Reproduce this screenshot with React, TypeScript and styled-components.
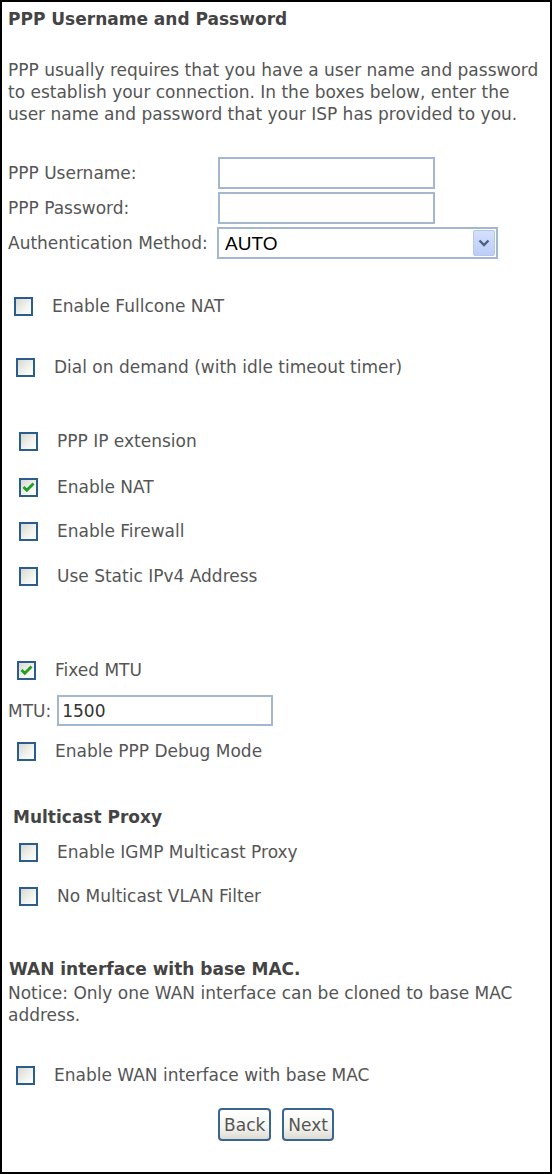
import React from "react";
import styled, { createGlobalStyle } from "styled-components";

const Global = createGlobalStyle`
  html, body { margin: 0; padding: 0; background: #fff; }
  body { font-family: "DejaVu Sans", Verdana, sans-serif; font-size: 17px; color: #555; }
`;

const Page = styled.div`
  box-sizing: border-box;
  width: 552px;
  height: 1174px;
  border: 2px solid #000;
  padding: 6px 0 0 6px;
  line-height: 22px;
`;

const Heading = styled.div<{ $mt?: number; $ml?: number }>`
  font-weight: bold;
  color: #444;
  margin-top: ${(p) => p.$mt ?? 0}px;
  margin-left: ${(p) => p.$ml ?? 0}px;
`;

const Para = styled.p<{ $mt?: number }>`
  margin: ${(p) => p.$mt ?? 0}px 0 0 0;
  white-space: nowrap;
`;

const FormGrid = styled.div`
  display: grid;
  grid-template-columns: 210px auto;
  row-gap: 3px;
  margin-top: 32px;
  align-items: center;
`;

const Label = styled.span``;

const TextBox = styled.input<{ $w: number }>`
  box-sizing: border-box;
  width: ${(p) => p.$w}px;
  height: 32px;
  border: 2px solid #a4b8cd;
  padding: 0 3px;
  font-family: "DejaVu Sans", Verdana, sans-serif;
  font-size: 17px;
  color: #333;
  outline: none;
  background: #fff;
`;

const SelectWrap = styled.div`
  position: relative;
  width: 281px;
  height: 32px;
  margin-left: -1px;
`;

const Select = styled.select`
  appearance: none;
  box-sizing: border-box;
  width: 100%;
  height: 100%;
  border: 2px solid #a4b8cd;
  background: #fff;
  padding: 0 0 0 6px;
  font-family: "Liberation Sans", Arial, sans-serif;
  font-size: 19px;
  color: #000;
  outline: none;
`;

const SelectArrow = styled.span`
  position: absolute;
  top: 3px;
  right: 3px;
  width: 22px;
  height: 26px;
  border-radius: 2px;
  background: linear-gradient(180deg, #d4e0fc 0%, #bccdf7 100%);
  border: 1px solid #b7c8f0;
  box-sizing: border-box;
  display: flex;
  align-items: center;
  justify-content: center;
  pointer-events: none;
`;

const CheckRow = styled.label<{ $mt: number; $ml: number }>`
  display: flex;
  align-items: center;
  height: 22px;
  margin-top: ${(p) => p.$mt}px;
  margin-left: ${(p) => p.$ml}px;
  gap: 19px;
`;

const Box = styled.span`
  box-sizing: border-box;
  flex: none;
  width: 19px;
  height: 19px;
  border: 2px solid #2b5d8c;
  background: linear-gradient(135deg, #d9d9d3 0%, #f3f3ef 60%, #ffffff 100%);
  display: flex;
  align-items: center;
  justify-content: center;
`;

const MtuRow = styled.div`
  display: flex;
  align-items: center;
  margin-top: 14px;
  height: 31px;
`;

const MtuInput = styled(TextBox)`
  height: 31px;
  margin-left: 6px;
`;

const ButtonBar = styled.div`
  display: flex;
  justify-content: center;
  gap: 11px;
  margin-top: 22px;
  margin-left: -6px;
`;

const Button = styled.button`
  box-sizing: border-box;
  height: 33px;
  padding: 0 4px;
  border: 2px solid #3a6592;
  border-radius: 4px;
  background: linear-gradient(180deg, #ffffff 0%, #f4f4f0 60%, #dcdcd2 100%);
  font-family: "DejaVu Sans", Verdana, sans-serif;
  font-size: 17px;
  color: #555;
`;

const Check = ({ on }: { on: boolean }) => (
  <Box>
    {on && (
      <svg width="13" height="12" viewBox="0 0 13 12">
        <path d="M1.5 6 L4.8 9.2 L11.5 2.5" stroke="#1f9e1f" strokeWidth="2.8" fill="none" />
      </svg>
    )}
  </Box>
);

const Opt = ({ text, on = false, mt, ml }: { text: string; on?: boolean; mt: number; ml: number }) => (
  <CheckRow $mt={mt} $ml={ml}>
    <Check on={on} />
    <span>{text}</span>
  </CheckRow>
);

export default function App() {
  return (
    <>
      <Global />
      <Page>
        <Heading>PPP Username and Password</Heading>
        <Para $mt={29}>
          PPP usually requires that you have a user name and password
          <br />
          to establish your connection. In the boxes below, enter the
          <br />
          user name and password that your ISP has provided to you.
        </Para>
        <FormGrid>
          <Label>PPP Username:</Label>
          <TextBox $w={217} />
          <Label>PPP Password:</Label>
          <TextBox $w={217} type="password" />
          <Label>Authentication Method:</Label>
          <SelectWrap>
            <Select defaultValue="AUTO">
              <option>AUTO</option>
              <option>PAP</option>
              <option>CHAP</option>
              <option>MSCHAP</option>
            </Select>
            <SelectArrow>
              <svg width="12" height="8" viewBox="0 0 12 8">
                <path d="M1.5 1.5 L6 6 L10.5 1.5" stroke="#4d6185" strokeWidth="2.4" fill="none" />
              </svg>
            </SelectArrow>
          </SelectWrap>
        </FormGrid>
        <Opt text="Enable Fullcone NAT" mt={36} ml={6} />
        <Opt text="Dial on demand (with idle timeout timer)" mt={39} ml={8} />
        <Opt text="PPP IP extension" mt={52} ml={11} />
        <Opt text="Enable NAT" on mt={24} ml={11} />
        <Opt text="Enable Firewall" mt={22} ml={11} />
        <Opt text="Use Static IPv4 Address" mt={23} ml={11} />
        <Opt text="Fixed MTU" on mt={72} ml={9} />
        <MtuRow>
          <Label>MTU:</Label>
          <MtuInput $w={216} defaultValue="1500" />
        </MtuRow>
        <Opt text="Enable PPP Debug Mode" mt={14} ml={9} />
        <Heading $mt={44} $ml={5}>Multicast Proxy</Heading>
        <Opt text="Enable IGMP Multicast Proxy" mt={13} ml={11} />
        <Opt text="No Multicast VLAN Filter" mt={22} ml={11} />
        <Heading $mt={51} $ml={1}>WAN interface with base MAC.</Heading>
        <Para $mt={2}>
          Notice: Only one WAN interface can be cloned to base MAC
          <br />
          address.
        </Para>
        <Opt text="Enable WAN interface with base MAC" mt={38} ml={8} />
        <ButtonBar>
          <Button>Back</Button>
          <Button>Next</Button>
        </ButtonBar>
      </Page>
    </>
  );
}
